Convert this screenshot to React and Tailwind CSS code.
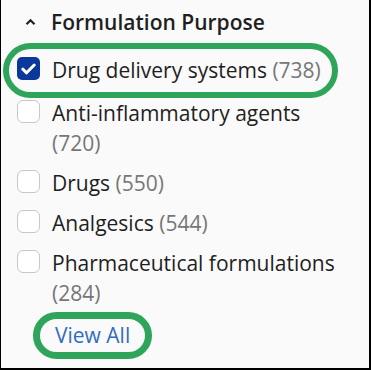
import React from "react";

const items = [
  { label: "Drug delivery systems", count: 738, checked: true },
  { label: "Anti-inflammatory agents", count: 720 },
  { label: "Drugs", count: 550 },
  { label: "Analgesics", count: 544 },
  { label: "Pharmaceutical formulations", count: 284 },
];

function Check({ checked }) {
  if (checked) {
    return (
      <span className="mt-[2px] flex h-[23px] w-[23px] shrink-0 items-center justify-center rounded-[5px] bg-[#0b389b]">
        <svg width="15" height="12" viewBox="0 0 15 12" fill="none">
          <path d="M1.8 6.2 5.6 9.8 13.2 2" stroke="#fff" strokeWidth="3" strokeLinecap="round" strokeLinejoin="round" />
        </svg>
      </span>
    );
  }
  return <span className="mt-[2px] h-[23px] w-[23px] shrink-0 rounded-[6px] border border-[#c8c8c8] bg-white" />;
}

export default function App() {
  return (
    <div className="relative h-[370px] w-[371px] overflow-hidden border-b-2 border-l border-r-2 border-black bg-[#fafafa] font-['Open_Sans',sans-serif] text-[#1f1f1f]">
      <div className="flex items-center pl-[24px] pt-[7px] text-[21px] font-semibold leading-[30px]">
        <svg width="11" height="8" viewBox="0 0 11 8" className="mr-[15px]">
          <path d="M1.5 6.2 5.5 2.2 9.5 6.2" stroke="#222" strokeWidth="2.2" fill="none" />
        </svg>
        Formulation Purpose
      </div>

      <div className="mt-[18px] flex flex-col gap-[10px] pl-[16px] pr-[22px]">
        {items.map((it, i) => (
          <div key={it.label} className={"flex gap-[12px] " + (i === 1 ? "mt-[3px]" : "")}>
            <Check checked={it.checked} />
            <div className="text-[21px] leading-[30px]">
              {it.label} <span className="text-[#777]">({it.count})</span>
            </div>
          </div>
        ))}
        <div className="pl-[38px] pt-[2px] text-[21px] leading-[30px] text-[#2f6cc0]">View All</div>
      </div>

      <div className="absolute left-[2px] top-[43px] h-[55px] w-[335px] rounded-full border-[6px] border-[#2ea55a]" />
      <div className="absolute left-[32px] top-[312px] h-[47px] w-[119px] rounded-full border-[7px] border-[#2ea55a]" />
    </div>
  );
}
